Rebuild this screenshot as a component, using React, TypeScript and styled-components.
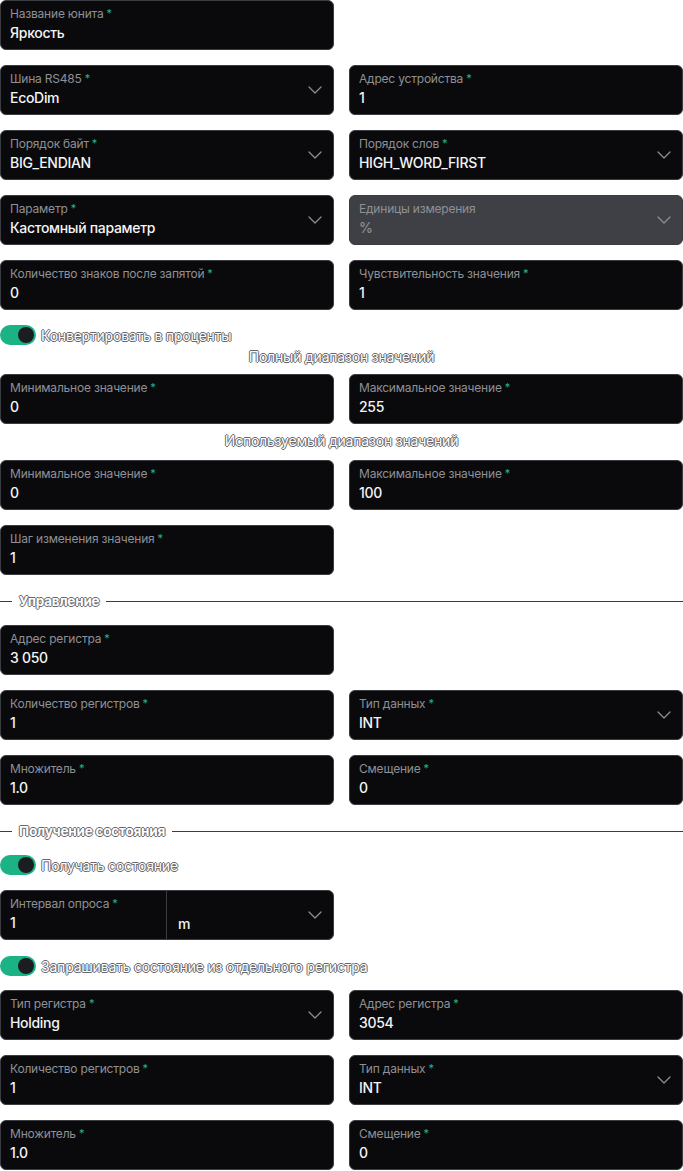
import styled, { createGlobalStyle } from 'styled-components';

const GlobalStyle = createGlobalStyle`
  body {
    margin: 0;
    background: #ffffff;
    font-family: Inter, "Noto Sans", sans-serif;
  }
`;

type FieldData = {
  label: string;
  value: string;
  required?: boolean;
  select?: boolean;
  disabled?: boolean;
};

const Chevron = () => (
  <svg width="14" height="8" viewBox="0 0 14 8" fill="none">
    <path d="M1 1l6 6 6-6" stroke="#8d8e94" strokeWidth="1.3" strokeLinecap="round" strokeLinejoin="round" />
  </svg>
);

function Field({ label, value, required = true, select, disabled }: FieldData) {
  return (
    <Box $disabled={disabled}>
      <FieldText>
        <Label>
          {label}
          {required && !disabled && <Star>*</Star>}
        </Label>
        <Value $disabled={disabled}>{value}</Value>
      </FieldText>
      {select && (
        <ChevronWrap>
          <Chevron />
        </ChevronWrap>
      )}
    </Box>
  );
}

function Toggle({ label, top, bottom }: { label: string; top: number; bottom: number }) {
  return (
    <ToggleRow $top={top} $bottom={bottom}>
      <Switch>
        <Knob />
      </Switch>
      <OutlinedText>{label}</OutlinedText>
    </ToggleRow>
  );
}

function Section({ title }: { title: string }) {
  return (
    <SectionRow>
      <SectionLine $short />
      <SectionTitle>{title}</SectionTitle>
      <SectionLine />
    </SectionRow>
  );
}

export default function App() {
  return (
    <>
      <GlobalStyle />
      <Page>
        <Grid>
          <Field label="Название юнита" value="Яркость" />
          <span />
          <Field label="Шина RS485" value="EcoDim" select />
          <Field label="Адрес устройства" value="1" />
          <Field label="Порядок байт" value="BIG_ENDIAN" select />
          <Field label="Порядок слов" value="HIGH_WORD_FIRST" select />
          <Field label="Параметр" value="Кастомный параметр" select />
          <Field label="Единицы измерения" value="%" select disabled />
          <Field label="Количество знаков после запятой" value="0" />
          <Field label="Чувствительность значения" value="1" />
        </Grid>

        <Toggle label="Конвертировать в проценты" top={15} bottom={4} />
        <Caption $top={0} $bottom={9}>Полный диапазон значений</Caption>
        <Grid>
          <Field label="Минимальное значение" value="0" />
          <Field label="Максимальное значение" value="255" />
        </Grid>
        <Caption $top={9} $bottom={11}>Используемый диапазон значений</Caption>
        <Grid>
          <Field label="Минимальное значение" value="0" />
          <Field label="Максимальное значение" value="100" />
          <Field label="Шаг изменения значения" value="1" />
        </Grid>

        <Section title="Управление" />
        <Grid>
          <Field label="Адрес регистра" value="3 050" />
          <span />
          <Field label="Количество регистров" value="1" />
          <Field label="Тип данных" value="INT" select />
          <Field label="Множитель" value="1.0" />
          <Field label="Смещение" value="0" />
        </Grid>

        <Section title="Получение состояния" />
        <Toggle label="Получать состояние" top={0} bottom={15} />
        <Grid>
          <SplitBox>
            <SplitPart $width={166}>
              <FieldText>
                <Label>
                  Интервал опроса<Star>*</Star>
                </Label>
                <Value>1</Value>
              </FieldText>
            </SplitPart>
            <SplitPart $last>
              <UnitValue>m</UnitValue>
              <ChevronWrap>
                <Chevron />
              </ChevronWrap>
            </SplitPart>
          </SplitBox>
        </Grid>
        <Toggle label="Запрашивать состояние из отдельного регистра" top={16} bottom={14} />
        <Grid>
          <Field label="Тип регистра" value="Holding" select />
          <Field label="Адрес регистра" value="3054" />
          <Field label="Количество регистров" value="1" />
          <Field label="Тип данных" value="INT" select />
          <Field label="Множитель" value="1.0" />
          <Field label="Смещение" value="0" />
        </Grid>
      </Page>
    </>
  );
}

const Page = styled.main`
  width: 683px;
  display: flex;
  flex-direction: column;
`;

const Grid = styled.div`
  display: grid;
  grid-template-columns: 334px 334px;
  column-gap: 15px;
  row-gap: 15px;
`;

const Box = styled.div<{ $disabled?: boolean }>`
  height: 50px;
  box-sizing: border-box;
  border: 1px solid #3b3c41;
  border-radius: 6px;
  background: ${(p) => (p.$disabled ? '#3f4045' : '#0a0a0c')};
  display: flex;
  align-items: center;
  padding: 0 10px 0 9px;
`;

const FieldText = styled.div`
  flex: 1;
  display: flex;
  flex-direction: column;
  gap: 3px;
  min-width: 0;
  margin-top: -2px;
`;

const Label = styled.div`
  font-size: 12px;
  line-height: 15px;
  color: #8f9096;
  letter-spacing: -0.2px;
  white-space: nowrap;
`;

const Star = styled.span`
  color: #1fb88a;
  margin-left: 3px;
  font-size: 11px;
  vertical-align: top;
`;

const Value = styled.div<{ $disabled?: boolean }>`
  font-size: 14px;
  line-height: 18px;
  font-weight: 500;
  color: ${(p) => (p.$disabled ? '#8d8e94' : '#f4f4f6')};
  letter-spacing: -0.3px;
`;

const ChevronWrap = styled.div`
  display: flex;
  align-items: center;
  padding-right: 1px;
`;

const SplitBox = styled(Box)`
  padding: 0;
`;

const SplitPart = styled.div<{ $width?: number; $last?: boolean }>`
  height: 100%;
  display: flex;
  align-items: center;
  padding: 0 10px 0 9px;
  box-sizing: border-box;
  flex: ${(p) => (p.$last ? '1' : `0 0 ${p.$width}px`)};
  border-right: ${(p) => (p.$last ? 'none' : '1px solid #3b3c41')};
`;

const UnitValue = styled.div`
  flex: 1;
  padding-top: 16px;
  padding-left: 2px;
  font-size: 14px;
  font-weight: 500;
  color: #f4f4f6;
`;

const OutlinedText = styled.span`
  color: #ffffff;
  font-size: 14px;
  letter-spacing: -0.2px;
  text-shadow:
    -1px 0 0 #66676c,
    1px 0 0 #66676c,
    0 -1px 0 #66676c,
    0 1px 0 #66676c;
`;

const ToggleRow = styled.div<{ $top: number; $bottom: number }>`
  display: flex;
  align-items: center;
  gap: 5px;
  height: 20px;
  margin: ${(p) => p.$top}px 0 ${(p) => p.$bottom}px;
`;

const Switch = styled.div`
  width: 36px;
  height: 20px;
  border-radius: 10px;
  background: #1bb386;
  display: flex;
  align-items: center;
  justify-content: flex-end;
  padding: 0 2px;
  box-sizing: border-box;
`;

const Knob = styled.div`
  width: 16px;
  height: 16px;
  border-radius: 50%;
  background: #1c1d21;
`;

const Caption = styled(OutlinedText).attrs({ as: 'div' })<{ $top: number; $bottom: number }>`
  text-align: center;
  line-height: 16px;
  margin: ${(p) => p.$top}px 0 ${(p) => p.$bottom}px;
`;

const SectionRow = styled.div`
  display: flex;
  align-items: center;
  gap: 7px;
  height: 20px;
  margin: 16px 0 14px;
`;

const SectionLine = styled.div<{ $short?: boolean }>`
  height: 1px;
  background: #3b3c41;
  flex: ${(p) => (p.$short ? '0 0 12px' : '1')};
`;

const SectionTitle = styled(OutlinedText)`
  font-size: 13.5px;
  font-weight: 700;
`;
